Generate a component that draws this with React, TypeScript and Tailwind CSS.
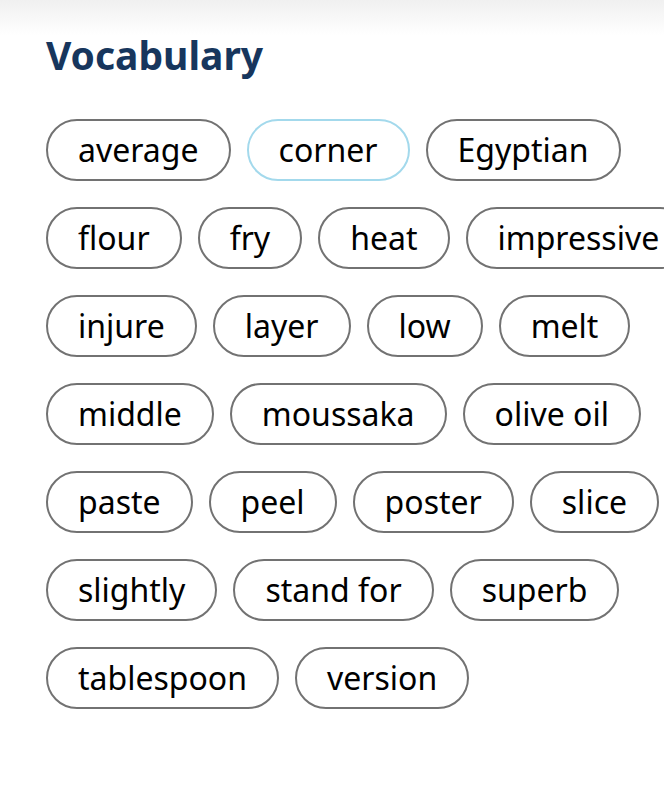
const words = [
  "average",
  "corner",
  "Egyptian",
  "flour",
  "fry",
  "heat",
  "impressive",
  "injure",
  "layer",
  "low",
  "melt",
  "middle",
  "moussaka",
  "olive oil",
  "paste",
  "peel",
  "poster",
  "slice",
  "slightly",
  "stand for",
  "superb",
  "tablespoon",
  "version",
];

const App = () => (
  <div className="relative h-[808px] w-[664px] overflow-hidden bg-white font-['Noto_Sans',sans-serif]">
    <div className="h-[35px] w-full bg-gradient-to-b from-[#f0f0f0] to-white" />

    <div className="px-[46px]">
      <h2 className="text-[39px] font-bold leading-none text-[#17365d]">Vocabulary</h2>

      <div className="mt-[45px] flex w-[690px] flex-wrap gap-x-4 gap-y-[26px]">
        {words.map((w) => (
          <span
            key={w}
            className={
              w === "corner"
                ? "flex h-[62px] items-center rounded-full border-2 border-[#a3d9ec] px-[30px] text-[32px] text-black"
                : "flex h-[62px] items-center rounded-full border-2 border-[#727272] px-[30px] text-[32px] text-black"
            }
          >
            {w}
          </span>
        ))}
      </div>
    </div>
  </div>
);

export default App;
